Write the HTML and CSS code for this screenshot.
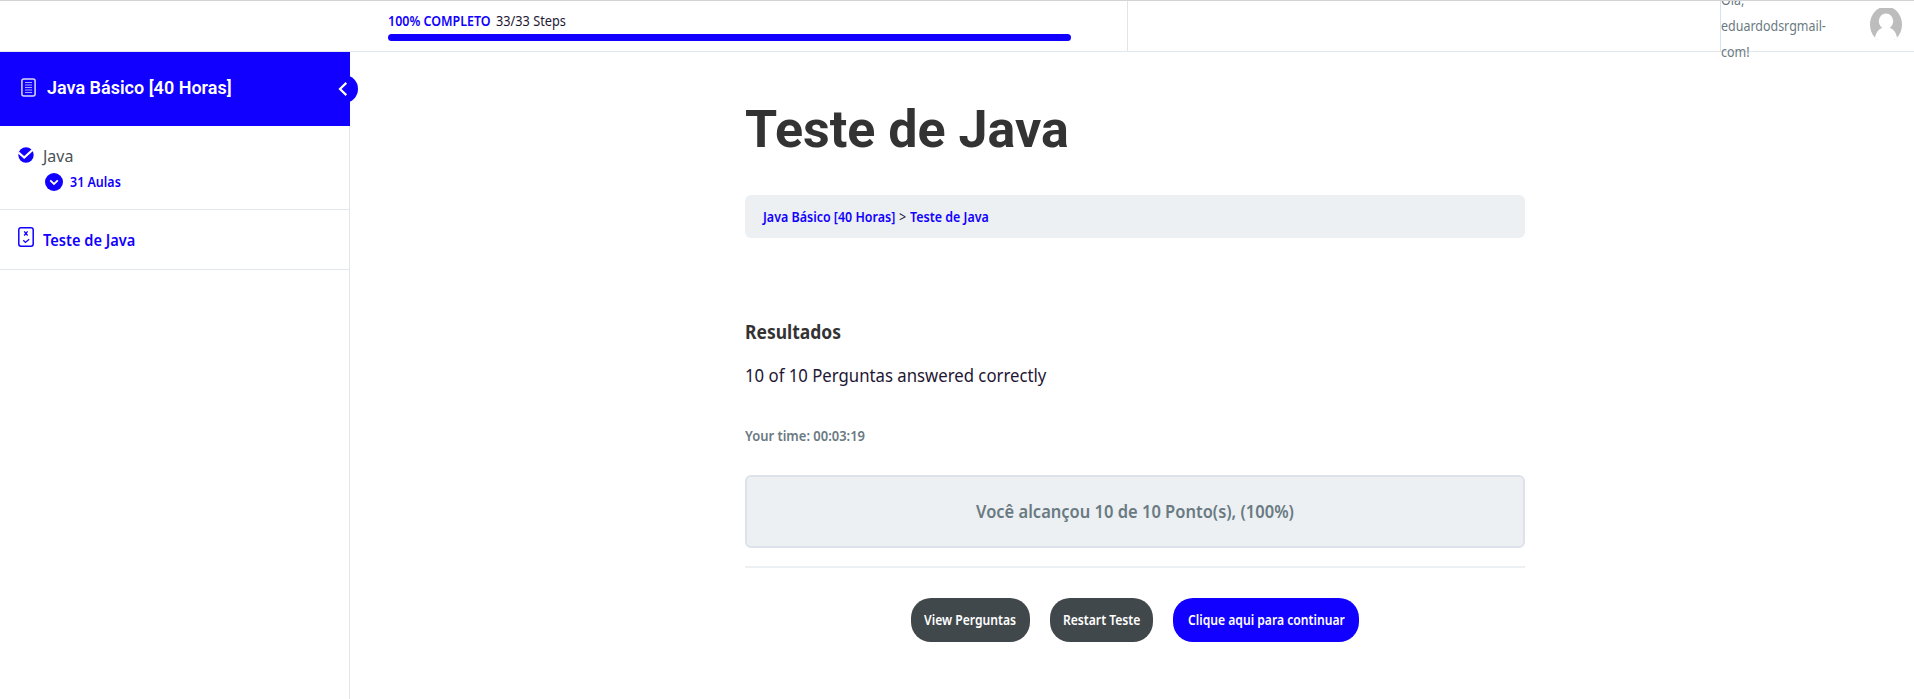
FILE: index.html
```html
<!DOCTYPE html>
<html lang="pt-BR">
<head>
<meta charset="utf-8">
<title>Teste de Java</title>
<link rel="stylesheet" href="styles.css">
</head>
<body>
<header class="topbar">
  <div class="brand"></div>
  <div class="progress">
    <div class="progress-label"><strong class="progress-done narrow">100% COMPLETO</strong><span class="progress-steps narrow">33/33 Steps</span></div>
    <div class="progress-bar"></div>
  </div>
  <div class="topnav"></div>
  <div class="user">
    <div class="hello narrow">Olá,<br>eduardodsrgmail-<br>com!</div>
    <svg class="avatar" width="32" height="32" viewBox="0 0 32 32"><defs><clipPath id="round"><ellipse cx="16" cy="16.500" rx="16" ry="18"/></clipPath></defs><g clip-path="url(#round)"><rect width="32" height="32" fill="#bdbdbd"/><ellipse cx="16" cy="13.300" rx="7.200" ry="7.800" fill="#fff"/><path d="M4.500 32C5.500 24 9 19.500 16 19.500S26.500 24 27.500 32Z" fill="#fff"/></g></svg>
  </div>
</header>
<div class="page">
  <aside class="sidebar">
    <div class="course">
      <svg class="course-icon" width="15" height="19" viewBox="0 0 15 19" fill="none" stroke="#fff"><rect x=".9" y=".9" width="13.200" height="17" rx="2" stroke-width="1.500" opacity=".85"/><path d="M4 4.500h7M4 7h7M4 9.500h7M4 12h7M4 14.500h7" opacity=".65"/></svg>
      <span class="course-name">Java Básico [40 Horas]</span>
      <span class="collapse"><svg width="10" height="14" viewBox="0 0 10 14" fill="none" stroke="#fff" stroke-width="2.200"><path d="M8.300 .9L2 7l6.300 6.100"/></svg></span>
    </div>
    <div class="lesson">
      <svg width="16" height="16" viewBox="0 0 16 16"><circle cx="8" cy="8" r="7.700" fill="#1100ff"/><path d="M.5 5.500L6.200 10.500 15 2.500" fill="none" stroke="#fff" stroke-width="2.300"/></svg>
      <div class="lesson-body"><span class="lesson-name">Java</span>
        <div class="lesson-more"><svg width="18" height="18" viewBox="0 0 18 18"><circle cx="9" cy="9" r="9" fill="#1100ff"/><path d="M5.200 7.300L9 11l3.800-3.700" fill="none" stroke="#fff" stroke-width="1.800"/></svg><span class="lesson-count narrow">31 Aulas</span></div>
      </div>
    </div>
    <div class="quiz">
      <svg width="16" height="20" viewBox="0 0 16 20" fill="none" stroke="#1100ff"><rect x=".8" y=".8" width="14.400" height="18.400" rx="2.200" stroke-width="1.500"/><path d="M6.200 4.300l3.400 4.200M9.600 4.300L6.200 8.500" stroke-width="1.300"/><path d="M5.300 13.200l2.100 2.200 3.800-3.200" stroke-width="1.300"/></svg>
      <span class="quiz-name narrow">Teste de Java</span>
    </div>
  </aside>
  <main class="content">
    <h1 class="title">Teste de Java</h1>
    <nav class="crumbs"><a class="crumb-course narrow">Java Básico [40 Horas]</a><span class="crumb-sep narrow">&gt;</span><a class="crumb-quiz narrow">Teste de Java</a></nav>
    <h4 class="results narrow">Resultados</h4>
    <p class="correct narrow">10 of 10 Perguntas answered correctly</p>
    <p class="time narrow">Your time: 00:03:19</p>
    <div class="points"><p class="points-text">Você alcançou 10 de 10 Ponto(s), (100%)</p></div>
    <div class="actions"><a class="btn btn-view"><span>View Perguntas</span></a><a class="btn btn-restart"><span>Restart Teste</span></a><a class="btn btn-next"><span>Clique aqui para continuar</span></a></div>
  </main>
</div>
</body>
</html>
```
FILE: styles.css
```css
* { box-sizing: border-box; }
body { margin: 0; height: 699px; overflow: hidden; background: #fff; color: #1e1633; font-family: "Noto Sans", sans-serif; font-size: 14px; }
h1, h4, p { margin: 0; }
svg { display: block; flex: none; }
.narrow { transform: scaleX(.89); transform-origin: 0 0; white-space: nowrap; }
.topbar { display: flex; height: 52px; border-top: 1px solid #d3d3d3; border-bottom: 1px solid #e2e7ed; }
.brand { width: 350px; }
.progress { width: 778px; padding: 6px 56px 0 38px; border-right: 1px solid #e2e4e8; }
.progress-label { display: flex; line-height: 28px; height: 27px; }
.progress-done { width: 107.500px; color: #1100ff; font-weight: 600; }
.progress-steps { transform: scaleX(.91); }
.progress-bar { height: 7px; border-radius: 4px; background: #1100ff; }
.topnav { width: 592px; }
.user { display: flex; flex: 1; justify-content: space-between; padding-right: 12px; border-left: 1px solid #d9e1ec; }
.hello { height: 78px; margin-top: -14px; color: #6a7a82; line-height: 26px; clip-path: inset(14px 0 0 0); }
.avatar { margin-top: 7px; }
.page { display: flex; height: 647px; }
.sidebar { width: 350px; border-right: 1px solid #e2e7ed; }
.course { position: relative; display: flex; align-items: center; width: 350px; height: 74px; padding: 0 0 3px 21px; background: #1100ff; color: #fff; font: 600 18px/24px Roboto, sans-serif; }
.course-name { margin-left: 11px; }
.collapse { position: absolute; left: 330px; top: 23px; width: 28px; height: 28px; padding: 7px 0 0 8px; border-radius: 50%; background: #1100ff; }
.lesson { display: flex; height: 84px; padding: 21px 0 0 18px; border-bottom: 1px solid #e2e7ed; }
.lesson-body { display: flex; flex-direction: column; align-items: flex-start; margin: -3px 0 0 9px; }
.lesson-name { color: #495255; font-size: 16px; line-height: 24px; }
.lesson-more { display: flex; align-items: center; gap: 7px; margin: 4px 0 0 2px; color: #1100ff; font-weight: 600; line-height: 20px; }
.quiz { display: flex; height: 60px; padding: 17px 0 0 18px; border-bottom: 1px solid #e2e7ed; color: #1100ff; font-weight: 600; }
.quiz-name { margin: 3px 0 0 9px; font-size: 16px; line-height: 20px; transform: scaleX(.912); }
.content { width: 780px; margin-left: 395px; }
.title { margin-top: 47px; color: #333; font: 700 52px/62px Roboto, sans-serif; }
.crumbs { display: flex; height: 43px; margin-top: 34px; padding-left: 18px; border-radius: 6px; background: #ecf0f3; line-height: 43px; }
.crumbs a { color: #1100ff; font-weight: 600; }
.crumb-course { width: 135.500px; }
.crumb-sep { width: 11px; }
.results { margin-top: 80px; color: #333; font-size: 19px; font-weight: 700; line-height: 28px; transform: scaleX(.92); }
.correct { margin-top: 15px; font-size: 18px; line-height: 28px; transform: scaleX(.93); }
.time { margin-top: 35px; color: #6a7a82; font-weight: 600; line-height: 24px; transform: scaleX(.926); }
.points { height: 73px; margin-top: 27px; border: 2px solid #dde2ea; border-radius: 6px; background: #ecf0f3; color: #6a7a82; font-size: 18px; font-weight: 600; line-height: 69px; text-align: center; }
.points-text { transform: scaleX(.916); }
.actions { display: flex; justify-content: center; gap: 20px; margin-top: 18px; padding-top: 30px; border-top: 2px solid #ecf0f3; }
.btn { display: flex; justify-content: center; height: 44px; border-radius: 20px; background: #41484b; color: #fff; font-weight: 600; line-height: 43px; white-space: nowrap; }
.btn span { transform: scaleX(.867); }
.btn-view { width: 119px; }
.btn-restart { width: 103px; }
.btn-next { width: 186px; background: #1100ff; }
```
